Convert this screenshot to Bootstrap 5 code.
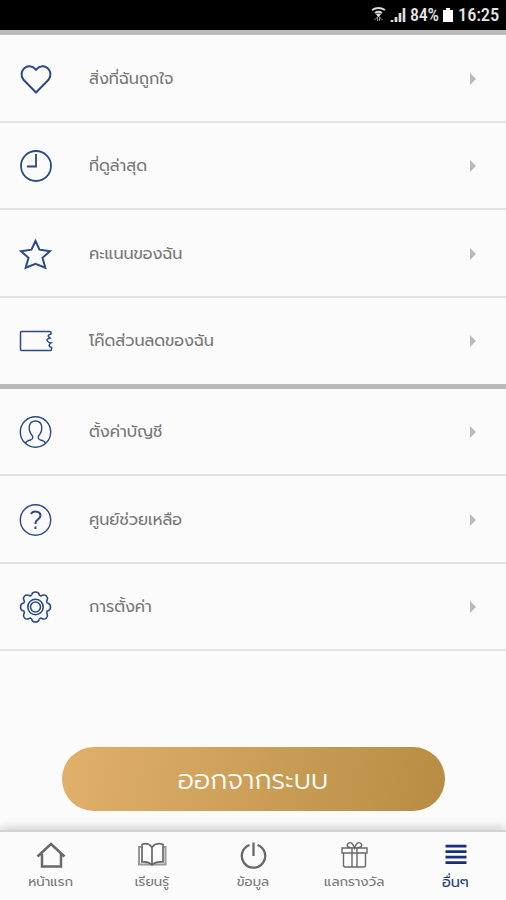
<!DOCTYPE html>
<html lang="th">
<head>
<meta charset="utf-8">
<meta name="viewport" content="width=device-width, initial-scale=1">
<title>อื่นๆ</title>
<link href="https://cdn.jsdelivr.net/npm/bootstrap@5.3.0/dist/css/bootstrap.min.css" rel="stylesheet">
<style>
body{width:506px;height:900px;overflow:hidden;background:#fbfbfb;font-family:Prompt,Kanit,"Noto Sans Thai UI","Noto Sans Thai",Roboto,sans-serif;color:#777}
.status-bar{height:30px;font:500 18px/30px "Roboto Condensed",Roboto,sans-serif;padding-right:7px;color:#e4e4e4}
.status-bar .charge{width:32px;font-size:18px;letter-spacing:-.2px}
.status-bar .clock{width:41px;font-size:18.500px;text-align:right;letter-spacing:-.15px}
.status-bar span{white-space:nowrap}
.menu-block{border-top:5px solid #bababa}
.menu-item{height:87.4px;border-bottom:2px solid #e2e2e2;padding:1.500px 29px 0 19px;color:#777;text-decoration:none}
.menu-block.first .menu-item:first-child{height:88px}
.menu-block.first .menu-item:last-child{border-bottom:0;height:86.200px;padding-top:0}
.menu-item svg.ico{width:34px;height:34px;fill:none;stroke:#2b4a86;stroke-width:1.8;margin-right:36px;flex:none}
.menu-item .caption-text{font-size:16px;line-height:24px;white-space:nowrap}
.logout{width:383px;height:64px;border-radius:32px;background:linear-gradient(100deg,#e1b06b,#b78d43);color:#fff;font-size:27px;font-weight:300;border:0;line-height:1;padding:2px 0 0}
.logout-area{padding-top:96px}
.tab-bar{height:70px;border-top:2px solid #d2d2d2;box-shadow:0 -3px 9px rgba(0,0,0,.17);background:#fbfbfb;position:relative}
.tab{width:101.2px;padding-top:8px;color:#777;text-decoration:none}
.tab svg{width:32px;height:32px;fill:none;stroke:#686868;stroke-width:2}
.tab span{font-size:13.300px;line-height:20px;white-space:nowrap}
.tab.current{color:#24407f}
.tab.current span{font-size:14.500px}
.tab.current svg{stroke:#18307a}
</style>
<script src="https://cdn.jsdelivr.net/npm/bootstrap@5.3.0/dist/js/bootstrap.bundle.min.js"></script>
</head>
<body class="d-flex flex-column">
<header class="status-bar bg-black d-flex justify-content-end align-items-center flex-shrink-0">
<svg width="40" height="30" viewBox="0 0 40 30" fill="none" stroke="#ddd"><path d="M2 10q6.500-4 13 0M5 13q3.500-2.500 7 0" stroke-width="1.800"/><path d="M6.500 14h4l-2 3z" fill="#ddd"/><path d="M4.500 20l3-3v4M12.500 20l-3-3v4" stroke="#999"/><path d="M22 22v-2M26 22v-5M30 22v-9M34 22V8" stroke-width="2.700"/></svg>
<span class="charge">84%</span>
<svg width="16" height="30" viewBox="0 0 16 30"><path d="M1 10h3V8h4v2h3v12H1z" fill="#fff"/></svg>
<span class="clock">16:25</span>
</header>
<main class="flex-grow-1">
<nav class="menu-block first">
<a href="#" class="menu-item d-flex align-items-center"><svg class="ico" viewBox="0 0 34 34"><path d="M17 30.500L4.500 17.800C-2 9 9-1 17 7.700C25-1 36 9 29.500 17.800Z" stroke-width="2"/></svg><span class="caption-text">สิ่งที่ฉันถูกใจ</span><svg class="ms-auto" width="8" height="12"><path d="M1 0l6 6-6 6z" fill="#b9b9b9"/></svg></a>
<a href="#" class="menu-item d-flex align-items-center"><svg class="ico" viewBox="0 0 34 34"><circle cx="17" cy="17" r="15"/><path d="M17 5v12.500H8"/></svg><span class="caption-text">ที่ดูล่าสุด</span><svg class="ms-auto" width="8" height="12"><path d="M1 0l6 6-6 6z" fill="#b9b9b9"/></svg></a>
<a href="#" class="menu-item d-flex align-items-center"><svg class="ico" viewBox="0 0 34 34"><path d="M16.500 4l4 8.700 10.500 1.500-7.500 6.600 2.800 10-9.800-4-9.800 4 2.800-10L2 14.200l10.500-1.500z" stroke-width="2"/></svg><span class="caption-text">คะแนนของฉัน</span><svg class="ms-auto" width="8" height="12"><path d="M1 0l6 6-6 6z" fill="#b9b9b9"/></svg></a>
<a href="#" class="menu-item d-flex align-items-center"><svg class="ico" viewBox="0 0 34 34"><path d="M2.500 7.500h28.500q1 0 1 1v1.500q-5 1.500-1 4-4 1-2.500 3 1 2 3.500 2-4 3 .5 4.500v2q0 1-1 1H2.500q-1 0-1-1v-17q0-1 1-1z" stroke-width="1.500"/></svg><span class="caption-text">โค๊ดส่วนลดของฉัน</span><svg class="ms-auto" width="8" height="12"><path d="M1 0l6 6-6 6z" fill="#b9b9b9"/></svg></a>
</nav>
<nav class="menu-block">
<a href="#" class="menu-item d-flex align-items-center"><svg class="ico" viewBox="0 0 34 34"><g stroke-width="1.400"><circle cx="16.500" cy="17" r="15.200"/><path d="M6.500 28q1-2 5-3 3-1 2-4C8.500 15.500 9 6 16.500 6s8 9.500 3 15q-1 3 2 4 4 1 5 3"/></g></svg><span class="caption-text">ตั้งค่าบัญชี</span><svg class="ms-auto" width="8" height="12"><path d="M1 0l6 6-6 6z" fill="#b9b9b9"/></svg></a>
<a href="#" class="menu-item d-flex align-items-center"><svg class="ico" viewBox="0 0 34 34"><circle cx="16.500" cy="17" r="15.200" stroke-width="1.400"/><path d="M12 11c2-3.800 9.500-3 9.500 1.500 0 4-5 4-5 7.500v1M16.500 23.500v2.500" stroke-width="2"/></svg><span class="caption-text">ศูนย์ช่วยเหลือ</span><svg class="ms-auto" width="8" height="12"><path d="M1 0l6 6-6 6z" fill="#b9b9b9"/></svg></a>
<a href="#" class="menu-item d-flex align-items-center"><svg class="ico" viewBox="0.5 0 34 34"><g stroke-width="1.600"><path id="cog-quarter" d="M13.300 4.500C14 1.200 20 1.200 20.700 4.500C21 6 22.500 6.200 24 5.300C27 4 30 7 28.700 10C27.800 11.500 28 13 29.500 13.300"/><use href="#cog-quarter" transform="rotate(90 17 17)"/><use href="#cog-quarter" transform="rotate(180 17 17)"/><use href="#cog-quarter" transform="rotate(270 17 17)"/><circle cx="17" cy="17" r="7.700"/><circle cx="17" cy="17" r="5"/></g></svg><span class="caption-text">การตั้งค่า</span><svg class="ms-auto" width="8" height="12"><path d="M1 0l6 6-6 6z" fill="#b9b9b9"/></svg></a>
</nav>
<div class="logout-area d-flex justify-content-center align-items-start"><button class="logout">ออกจากระบบ</button></div>
</main>
<footer class="tab-bar d-flex flex-shrink-0">
<a href="#" class="tab d-flex flex-column align-items-center"><svg viewBox="0 0 32 32"><path d="M2.500 16.500L16 4l13.500 12.500M7 14v12.500h19V14" stroke-width="2.500"/></svg><span>หน้าแรก</span></a>
<a href="#" class="tab d-flex flex-column align-items-center"><svg viewBox="0 0 32 32"><path d="M5 7H3v17.500h26.500V7h-2" stroke="#999"/><path d="M16 7.500Q12 2 6 4.500v17.500q6-1 10 3 4-4 11-3V4.500Q20 2 16 7.500v17.500" stroke-width="1.700"/></svg><span>เรียนรู้</span></a>
<a href="#" class="tab d-flex flex-column align-items-center"><svg viewBox="0 0 32 32"><path d="M12.500 5a11.700 11.700 0 1 0 8 0M16.500 2.500V16" stroke-width="2.300"/></svg><span>ข้อมูล</span></a>
<a href="#" class="tab d-flex flex-column align-items-center"><svg viewBox="0 0 32 32"><path d="M4 8h25v5H4zM5.500 13v12q0 2 2 2h18q2 0 2-2V13M14 8v19M19 8v19M16 8Q7 8 10 3.500q4-3 6.500 4.500Q19 .5 23 3.500 26 8 16 8" stroke-width="1.400"/></svg><span>แลกรางวัล</span></a>
<a href="#" class="tab current d-flex flex-column align-items-center"><svg viewBox="0 0 32 32"><path d="M6.500 6.200h21M6.500 11.700h21M6.500 17.200h21M6.500 22.700h21" stroke-width="2.800"/></svg><span>อื่นๆ</span></a>
</footer>
</body>
</html>
